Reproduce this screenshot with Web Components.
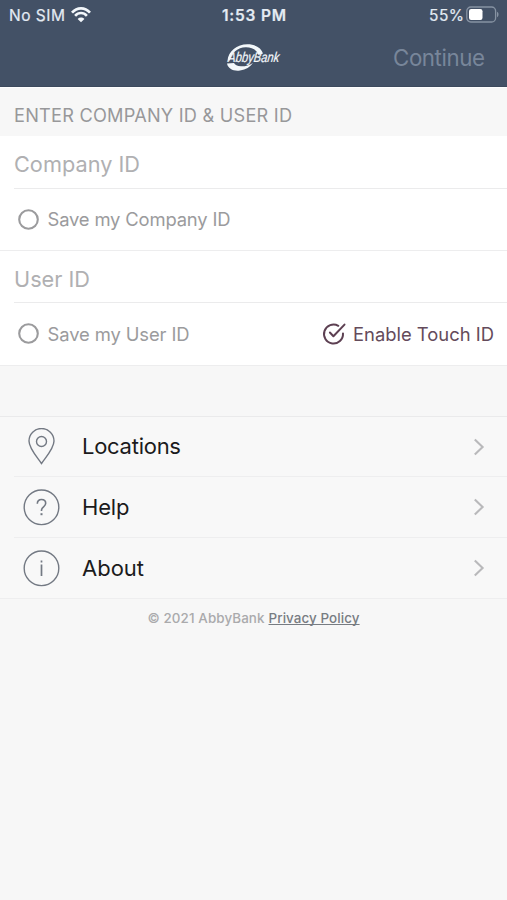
<!DOCTYPE html>
<html lang="en">
<head>
<meta charset="utf-8">
<title>AbbyBank</title>
<style>
html,body{margin:0;background:#f7f7f7}
body{font-family:Inter,"Liberation Sans",sans-serif;width:507px;height:900px;overflow:hidden}
</style>
</head>
<body>
<bank-login></bank-login>
<script>
const define = (name, html, setup) => customElements.define(name, class extends HTMLElement {
  connectedCallback() {
    if (this.shadowRoot) return;
    const t = document.createElement('template');
    t.innerHTML = html;
    this.attachShadow({mode: 'open'}).append(t.content.cloneNode(true));
    if (setup) setup(this, this.shadowRoot);
  }
});

// One line of text tracked so that it spans the width given in its "span" attribute.
define('tracked-text', `<style>
:host{display:inline-block;white-space:pre;line-height:1.2}
span{display:inline-block}
:host([underlined]) span{text-decoration:underline;text-decoration-thickness:1px;text-underline-offset:1px;text-decoration-skip-ink:none}
</style><span><slot></slot></span>`, (el, root) => {
  const s = root.querySelector('span'), want = +el.getAttribute('span');
  const n = el.textContent.length;
  const gap = (want - s.getBoundingClientRect().width) / (n - 1);
  s.style.letterSpacing = gap.toFixed(3) + 'px';
  s.style.marginRight = (-gap).toFixed(3) + 'px';
});

define('status-bar', `<style>
:host{display:grid;grid-template-columns:1fr auto 1fr;align-items:center;height:30px;padding:0 8px 0 9px;color:#e4ebf3;font-size:15.5px}
.l,.r{display:flex;align-items:center}
.l{gap:6px}.r{justify-content:flex-end;gap:2px}
svg{display:block}
.t{font-weight:600}
tracked-text{-webkit-text-stroke:.2px currentColor;padding-top:2px}
</style>
<div class="l"><tracked-text span="56">No SIM</tracked-text>
<svg width="20" height="16" viewBox="0 0 20 16" fill="none" stroke="#f3f7fb" stroke-width="2.6"><path d="M1 5.700C6-.1 14-.1 19 5.700M4.100 8.900c3.400-3.800 8.400-3.800 11.800 0"/><path d="M10 15.300 6.600 11.900c2-1.900 4.800-1.900 6.800 0z" fill="#f3f7fb" stroke="none"/></svg></div>
<tracked-text class="t" span="64">1:53 PM</tracked-text>
<div class="r"><tracked-text span="35">55%</tracked-text>
<svg width="33" height="18" viewBox="0 0 33 18"><rect x=".8" y="1" width="28.800" height="15" rx="4" fill="none" stroke="#8793a3" stroke-width="1.300"/><rect x="3" y="3" width="13.500" height="11" rx="2.200" fill="#fff"/><path d="M31 5.800c2 .8 2 4.600 0 5.400z" fill="#8793a3"/></svg></div>`);

define('bank-logo', `<style>
:host{display:block;width:56px;height:30px}svg{display:block;overflow:visible}
text{font:italic 400 14px "Liberation Sans",sans-serif}
</style>
<svg width="56" height="30" viewBox="0 0 56 30">
<path d="M1.500 18C2 8.500 11 1.300 21.500 1.300c8.500 0 14 4 15.500 9.200l-4.500 1.500C31 7 26 4 19.500 4.200 12 4.500 5.500 9.500 4 17z" fill="#f3f8fb"/>
<path d="M1 20.500C2 26 8 28.500 14 27.500c6-1 10-3.500 13-7.500-4 2.500-8 3.500-12 3.300-4-.2-6-1.300-7-3.300z" fill="#f3f8fb"/>
<text transform="translate(1.800 19.200) scale(.8 1) skewX(-8)" x="0" y="0" fill="#f3f8fb" stroke="#f3f8fb" stroke-width=".2">AbbyBank</text>
</svg>`);

define('nav-bar', `<style>
:host{display:grid;grid-template-columns:1fr auto 1fr;height:57px;align-items:center;padding:0 22px 0 22px;box-sizing:border-box;border-bottom:1px solid #3d4a5d}
tracked-text{justify-self:end;color:#78869a;font-size:22.300px}
bank-logo{margin:0 0 0 1px}
</style><span></span><bank-logo></bank-logo><tracked-text span="92">Continue</tracked-text>`);

define('section-title', `<style>
:host{display:flex;align-items:center;height:49px;padding:8px 14px 0;box-sizing:border-box;border-top:1px solid #fdfdfe;color:#98989a;font-size:18.200px;background:#f7f7f7}
</style><slot></slot>`);

define('text-field', `<style>
:host{display:block;background:#fff;padding-left:14px}
div{display:flex;align-items:center;box-sizing:border-box;height:var(--h,53px);padding-top:5px;border-bottom:1px solid #ebebec;color:#b0b0b2;font-size:21.700px}
</style><div><slot></slot></div>`);

define('option-row', `<style>
:host{display:flex;align-items:center;justify-content:space-between;box-sizing:border-box;height:var(--h,62px);padding:0 13px 0 18px;background:#fff;border-bottom:1px solid #ededee}
</style><slot></slot>`);

define('check-option', `<style>
:host{display:flex;align-items:center;gap:8.500px;color:#9b9b9d;font-size:18.400px}
:host([checked]){color:#644b5b;gap:7px}
svg{display:block;overflow:visible}
:host([checked]) .off,:host(:not([checked])) .on{display:none}
</style>
<svg class="off" width="21" height="21" viewBox="0 0 21 21"><circle cx="10.500" cy="10.500" r="9.300" fill="none" stroke="#9b9b9d" stroke-width="2.100"/></svg>
<svg class="on" width="24" height="22" viewBox="0 0 24 22" fill="none" stroke="#5d4052" stroke-width="2" stroke-linecap="round" stroke-linejoin="round"><path d="M16.300 2.800A9.500 9.500 0 1 0 21 10.500"/><path d="m7.900 9.500 3.500 3.800L22.500 1.600"/></svg>
<slot></slot>`);

define('menu-row', `<style>
:host{display:block;padding-left:14px;background:#f8f8f8}
:host([last]){padding-left:0}
:host([last]) .row{padding-left:23px}
.row{display:flex;align-items:center;box-sizing:border-box;height:var(--h,61px);padding:0 22px 0 9px;border-bottom:1px solid #eeeeef;color:#1b1b1c;font-size:22px}
.ic{width:37px;height:37px;margin-right:22px}
.ic svg{display:block}
.go{margin-left:auto}
</style><div class="row"><div class="ic"></div><slot></slot>
<svg class="go" width="12" height="18" viewBox="0 0 12 18" fill="none" stroke="#b9b9bb" stroke-width="2.100"><path d="m1.800 1.500 7.800 7.500-7.800 7.500"/></svg></div>`, (el, root) => {
  const icons = {
    pin: '<path d="M18.500 35.500C14.500 29.500 6 20.500 6 13a12.500 12.500 0 0 1 25 0C31 20.500 22.500 29.500 18.500 35.500z"/><circle cx="18.500" cy="13.500" r="5"/>',
    help: '<circle cx="18.500" cy="18.300" r="17.300"/><path d="M14.300 14.800c.1-2.700 1.700-4.300 4.200-4.300s4.200 1.500 4.200 3.800c0 3.500-4.200 3.600-4.200 7v.8" stroke-width="1.600"/><path d="M18.500 24.200v2" stroke-width="2"/>',
    info: '<circle cx="18.500" cy="18.300" r="17.300"/><path d="M18.500 14.500V26M18.500 10.500v2" stroke-width="1.700"/>'
  };
  root.querySelector('.ic').innerHTML = '<svg width="37" height="37" viewBox="0 0 37 37" fill="none" stroke="#737983" stroke-width="1.400">' + icons[el.getAttribute('icon')] + '</svg>';
});

define('page-footer', `<style>
:host{display:flex;justify-content:center;align-items:center;gap:4px;height:38px;color:#aaaaac;font-size:13.400px;font-weight:500}
.link{color:#777c82}
</style><tracked-text span="117">© 2021 AbbyBank</tracked-text><tracked-text class="link" underlined span="91">Privacy Policy</tracked-text>`);

define('bank-login', `<style>
:host{display:block;width:507px;height:900px;background:#f7f7f7}
header{background:#435166}
.menu{margin-top:50px;border-top:1px solid #eaeaeb}
</style>
<header><status-bar></status-bar><nav-bar></nav-bar></header>
<section-title><tracked-text span="278">ENTER COMPANY ID &amp; USER ID</tracked-text></section-title>
<text-field><tracked-text span="126">Company ID</tracked-text></text-field>
<option-row><check-option><tracked-text span="183">Save my Company ID</tracked-text></check-option></option-row>
<text-field style="--h:52px"><tracked-text span="76">User ID</tracked-text></text-field>
<option-row style="--h:63px"><check-option><tracked-text span="142">Save my User ID</tracked-text></check-option><check-option checked><tracked-text span="141">Enable Touch ID</tracked-text></check-option></option-row>
<div class="menu">
<menu-row icon="pin" style="--h:60px"><tracked-text span="99">Locations</tracked-text></menu-row>
<menu-row icon="help"><tracked-text span="47.500">Help</tracked-text></menu-row>
<menu-row icon="info" last><tracked-text span="62">About</tracked-text></menu-row>
</div>
<page-footer></page-footer>`);
</script>
</body>
</html>
